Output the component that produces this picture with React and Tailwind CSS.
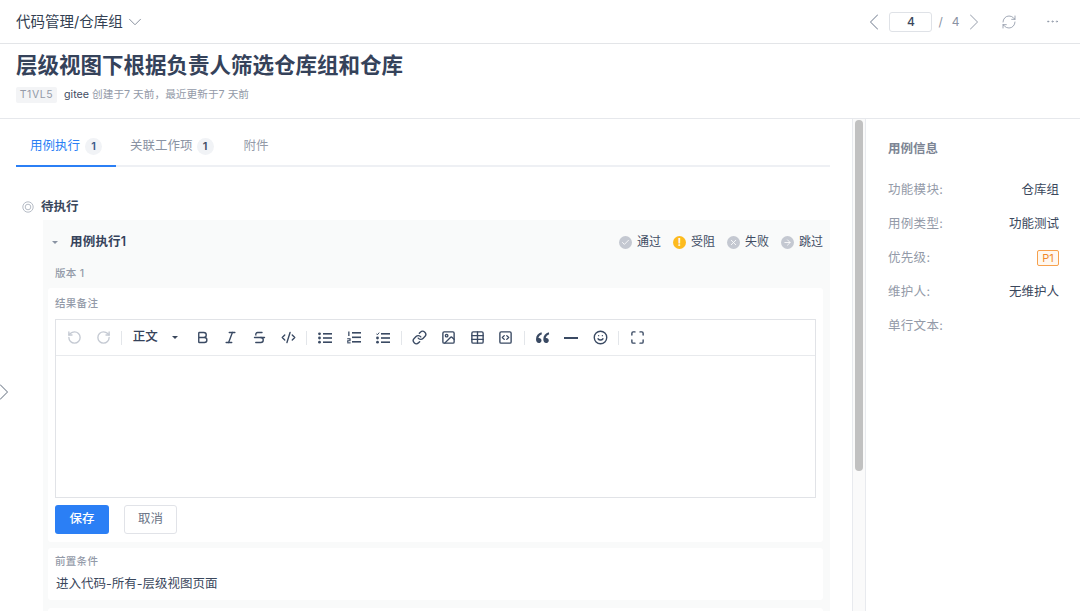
import React from "react";
import {
  ChevronDown, ChevronLeft, ChevronRight, RefreshCw, MoreHorizontal, RotateCcw, RotateCw, Bold, Italic, Strikethrough,
  CodeXml, Link, Image, Table, SquareCode, Smile, Maximize, Check, X, ArrowRight,
} from "lucide-react";

const font = { fontFamily: '"Inter","Noto Sans CJK SC",sans-serif' };

function Tool({ Icon, light, children }) {
  return (
    <div className="flex h-full w-[28.7px] shrink-0 items-center justify-center">
      {Icon ? <Icon size={15} strokeWidth={2.2} className={light ? "text-[#c5cad3]" : "text-[#3a4a63]"} /> : children}
    </div>
  );
}
const Sep = () => <div className="mx-[3.7px] h-[14px] w-px shrink-0 bg-[#e3e6ea]" />;

const ink = "#3a4a63";

function QuoteIcon() {
  return (
    <Tool>
      <svg width="15" height="13" viewBox="0 0 15 13" fill={ink}>
        <path d="M6.5 1.2C3.2 2.2 1 4.6 1 8.2 1 10.6 2.2 12 3.8 12 5.3 12 6.5 10.9 6.5 9.4 6.5 7.9 5.4 6.9 4 6.9 3.8 6.9 3.5 7 3.4 7 3.7 5.4 5 4 6.9 3.2Z" />
        <path d="M13.8 1.2C10.5 2.2 8.3 4.6 8.3 8.2c0 2.4 1.2 3.8 2.8 3.8 1.5 0 2.7-1.1 2.7-2.6 0-1.5-1.1-2.5-2.5-2.5-.2 0-.5.1-.6.1.3-1.6 1.6-3 3.5-3.8Z" />
      </svg>
    </Tool>
  );
}
function BulletIcon() {
  return (
    <Tool>
      <svg width="14" height="12" viewBox="0 0 14 12" fill={ink}>
        <circle cx="1.5" cy="1.8" r="1.4" />
        <circle cx="1.5" cy="6" r="1.4" />
        <circle cx="1.5" cy="10.2" r="1.4" />
        <rect x="5" y="1" width="9" height="1.6" />
        <rect x="5" y="5.2" width="9" height="1.6" />
        <rect x="5" y="9.4" width="9" height="1.6" />
      </svg>
    </Tool>
  );
}
function OrderedIcon() {
  return (
    <Tool>
      <svg width="14" height="13" viewBox="0 0 14 13" fill={ink}>
        <rect x="1.2" y="0.5" width="1.3" height="4.5" />
        <rect x="0.2" y="7.2" width="3.4" height="1.1" />
        <rect x="2.4" y="8" width="1.2" height="1.4" />
        <rect x="0.2" y="9.2" width="3.4" height="1" />
        <rect x="0.2" y="10" width="1.2" height="1.4" />
        <rect x="0.2" y="11.3" width="3.4" height="1.1" />
        <rect x="5" y="1" width="9" height="1.6" />
        <rect x="5" y="5.5" width="9" height="1.6" />
        <rect x="5" y="10" width="9" height="1.6" />
      </svg>
    </Tool>
  );
}
function TaskIcon() {
  return (
    <Tool>
      <svg width="14" height="12" viewBox="0 0 14 12" fill={ink}>
        <path d="M0.3 1.6 1.4 2.8 3.2 0.6" fill="none" stroke={ink} strokeWidth="1" />
        <circle cx="1.5" cy="6" r="1.4" />
        <circle cx="1.5" cy="10.2" r="1.4" />
        <rect x="5" y="1" width="9" height="1.6" />
        <rect x="5" y="5.2" width="9" height="1.6" />
        <rect x="5" y="9.4" width="9" height="1.6" />
      </svg>
    </Tool>
  );
}
function DashIcon() {
  return (
    <Tool>
      <svg width="14" height="2" viewBox="0 0 14 2" fill={ink}>
        <rect width="14" height="2" />
      </svg>
    </Tool>
  );
}

function Status({ color, icon, label }) {
  return (
    <div className="flex items-center gap-[5px]">
      <span className="flex h-[13px] w-[13px] items-center justify-center rounded-full" style={{ backgroundColor: color }}>
        {icon}
      </span>
      <span className="text-[12px] text-[#3f4c63]">{label}</span>
    </div>
  );
}

function InfoRow({ label, children }) {
  return (
    <div className="flex h-[34px] items-center justify-between text-[12.5px]">
      <span className="tracking-[0.3px] text-[#939aa8]">{label}</span>
      <span className="text-[#3a475c]">{children}</span>
    </div>
  );
}

export default function App() {
  return (
    <div className="relative flex h-[611px] w-[1080px] flex-col overflow-hidden bg-white" style={font}>
      <header className="flex h-[44px] shrink-0 items-center justify-between border-b border-[#e3e5e8] pl-4 pr-[20.5px]">
        <div className="flex items-center gap-[1.5px] text-[14.5px] text-[#333f52]">
          <span>代码管理/仓库组</span>
          <ChevronDown size={22} strokeWidth={1} className="text-[#7f8896]" />
        </div>
        <div className="flex items-center text-[#8a93a3]">
          <ChevronLeft size={28} strokeWidth={0.9} />
          <div className="ml-[1.5px] flex h-[20px] w-[43px] items-center justify-center rounded-[3px] border border-[#dfe2e7] text-[12px] font-medium text-[#3a475c]">4</div>
          <span className="ml-[6px] text-[12px]">/</span>
          <span className="ml-[9px] text-[12px]">4</span>
          <ChevronRight size={28} strokeWidth={0.9} className="text-[#aab0bb]" />
          <RefreshCw size={16} strokeWidth={1.2} className="ml-[13.5px]" />
          <MoreHorizontal size={15} strokeWidth={1.2} className="ml-[27.5px]" />
        </div>
      </header>

      <section className="flex h-[75px] shrink-0 flex-col border-b border-[#e6e8ec] px-4">
        <h1 className="mt-[5px] h-[32px] text-[21.5px] font-bold leading-[32px] text-[#35425a]">层级视图下根据负责人筛选仓库组和仓库</h1>
        <div className="mt-[6px] flex items-center text-[10.7px]">
          <span className="flex h-[16px] w-[41px] items-center justify-center rounded-[2px] bg-[#f3f4f6] text-[10.5px] tracking-[0.6px] text-[#939aa8]">T1VL5</span>
          <span className="ml-[7px] text-[#3f4c63]">gitee</span>
          <span className="ml-[3px] text-[#939aa8]">创建于7 天前，最近更新于7 天前</span>
        </div>
      </section>

      <main className="flex min-h-0 flex-1">
        <div className="w-[852px] shrink-0 overflow-hidden pl-4 pr-[22px]">
          <nav className="flex h-[48px] items-stretch border-b-2 border-[#eef0f4] pt-[9px] text-[12.5px]">
            <div className="-mb-[2px] flex w-[100px] items-center justify-center gap-[5px] border-b-2 border-[#2b7ff5] text-[#2b7ff5]">
              <span>用例执行</span>
              <span className="flex h-[17px] w-[17px] items-center justify-center rounded-full bg-[#f1f3f6] text-[11px] font-semibold text-[#3a5a8a]">1</span>
            </div>
            <div className="ml-[14px] flex items-center gap-[4px] text-[#8a93a3]">
              <span>关联工作项</span>
              <span className="flex h-[17px] w-[17px] items-center justify-center rounded-full bg-[#f1f3f6] text-[11px] font-semibold text-[#3f4c63]">1</span>
            </div>
            <div className="ml-[30px] flex items-center text-[#939aa8]">附件</div>
          </nav>

          <div className="mt-[30px] flex h-[20px] items-center">
            <svg width="12" height="12" viewBox="0 0 12 12" fill="none" stroke="#aeb4bf" className="ml-[6px]">
              <circle cx="6" cy="6" r="5.2" strokeWidth="0.9" />
              <circle cx="6" cy="6" r="2.8" strokeWidth="0.9" />
            </svg>
            <span className="ml-[7px] text-[12.5px] font-bold text-[#3a475c]">待执行</span>
          </div>

          <div className="ml-[27px] mt-[3px] bg-[#f9fafa] pb-[8px] pl-[5px] pr-[7px] pt-[5px]">
            <div className="flex h-[34px] items-center justify-between">
              <div className="flex items-center">
                <span className="ml-[4px] h-0 w-0 border-x-[3px] border-t-[3px] border-x-transparent border-t-[#8a93a3]" />
                <span className="ml-[12px] text-[12.5px] font-semibold tracking-[0.2px] text-[#35425a]">用例执行1</span>
              </div>
              <div className="flex items-center gap-[12px]">
                <Status color="#c4c8d1" label="通过" icon={<Check size={9} strokeWidth={2.2} className="text-white" />} />
                <Status color="#fdbb1f" label="受阻" icon={<span className="text-[10px] font-bold leading-none text-white">!</span>} />
                <Status color="#c4c8d1" label="失败" icon={<X size={9} strokeWidth={2.2} className="text-white" />} />
                <Status color="#c4c8d1" label="跳过" icon={<ArrowRight size={9} strokeWidth={2.2} className="text-white" />} />
              </div>
            </div>
            <div className="flex h-[29px] items-center pl-[7px] text-[10.5px] font-medium tracking-[0.3px] text-[#939aa8]">版本 1</div>

            <div className="rounded-[3px] bg-white px-[7px] pb-[8px]">
              <div className="flex h-[31px] items-center text-[10.5px] font-medium tracking-[0.3px] text-[#939aa8]">结果备注</div>
              <div className="border border-[#e1e3e7]">
                <div className="flex h-[36px] items-center border-b border-[#e8eaed] pl-[4px]">
                  <Tool Icon={RotateCcw} light />
                  <Tool Icon={RotateCw} light />
                  <Sep />
                  <div className="ml-[7px] flex w-[55px] shrink-0 items-center">
                    <span className="text-[12.5px] font-medium text-[#35425a]">正文</span>
                    <span className="ml-[14px] h-0 w-0 border-x-[3px] border-t-[3px] border-x-transparent border-t-[#3a475c]" />
                  </div>
                  <Tool Icon={Bold} />
                  <Tool Icon={Italic} />
                  <Tool Icon={Strikethrough} />
                  <Tool Icon={CodeXml} />
                  <Sep />
                  <BulletIcon />
                  <OrderedIcon />
                  <TaskIcon />
                  <Sep />
                  <Tool Icon={Link} />
                  <Tool Icon={Image} />
                  <Tool Icon={Table} />
                  <Tool Icon={SquareCode} />
                  <Sep />
                  <QuoteIcon />
                  <DashIcon />
                  <Tool Icon={Smile} />
                  <Sep />
                  <Tool Icon={Maximize} />
                </div>
                <div className="h-[141px]" />
              </div>
              <div className="mt-[7px] flex items-center gap-[15px]">
                <button className="flex h-[29px] w-[54px] items-center justify-center rounded-[3px] bg-[#2b7ff5] text-[12.5px] font-medium text-white">保存</button>
                <button className="flex h-[29px] w-[53px] items-center justify-center rounded-[3px] border border-[#e1e3e8] bg-white text-[12.5px] text-[#6b7587]">取消</button>
              </div>
            </div>

            <div className="mt-[6px] h-[52px] rounded-[3px] bg-white px-[7px]">
              <div className="flex h-[27px] items-center text-[10.5px] font-medium tracking-[0.3px] text-[#939aa8]">前置条件</div>
              <div className="pl-px text-[12.5px] leading-[18px] text-[#3a475c]">进入代码-所有-层级视图页面</div>
            </div>
            <div className="mt-[8px] h-[40px] rounded-[3px] bg-white" />
          </div>
        </div>

        <div className="w-[14px] shrink-0 border-x border-[#e8eaee] bg-[#fafafa] px-[2px] pt-[1px]">
          <div className="h-[351px] rounded-full bg-[#c1c1c1]" />
        </div>

        <aside className="flex-1 pl-[22px] pr-[21px]">
          <h2 className="mt-[21px] h-[18px] text-[12.5px] font-semibold leading-[18px] text-[#7d8594]">用例信息</h2>
          <div className="mt-[15px]">
            <InfoRow label="功能模块:">仓库组</InfoRow>
            <InfoRow label="用例类型:">功能测试</InfoRow>
            <InfoRow label="优先级:">
              <span className="flex h-[16px] w-[22px] items-center justify-center rounded-[2px] border border-[#f7a14d] bg-[#fff8f0] text-[11px] text-[#f08a2c]">P1</span>
            </InfoRow>
            <InfoRow label="维护人:">无维护人</InfoRow>
            <InfoRow label="单行文本:" />
          </div>
        </aside>
      </main>

      <ChevronRight size={28} strokeWidth={0.9} className="absolute left-[-10px] top-[378px] text-[#7f8896]" />
    </div>
  );
}
